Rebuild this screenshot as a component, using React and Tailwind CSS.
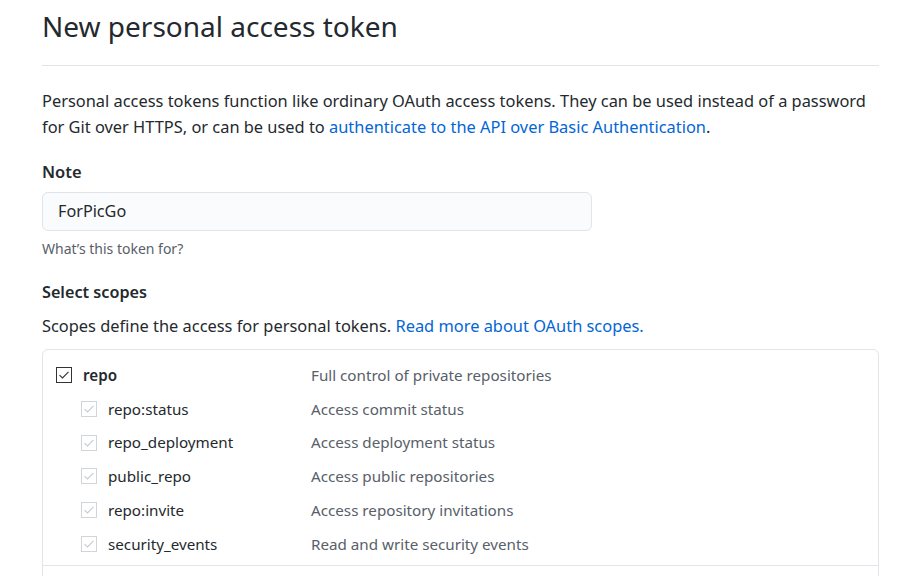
import React from "react";

const font = { fontFamily: '"Noto Sans", "Open Sans", sans-serif' };

function Check({ disabled }) {
  return disabled ? (
    <svg width="16" height="16" viewBox="0 0 16 16" className="shrink-0">
      <rect x="0.5" y="0.5" width="15" height="15" fill="#fff" stroke="#d1d5da" />
      <path d="M3.5 8.2 L6.5 11 L12.5 4.8" fill="none" stroke="#c6cbd1" strokeWidth="1.1" />
    </svg>
  ) : (
    <svg width="16" height="16" viewBox="0 0 16 16" className="shrink-0">
      <rect x="0.5" y="0.5" width="15" height="15" fill="#fff" stroke="#333" />
      <path d="M3.5 8.2 L6.5 11 L12.5 4.8" fill="none" stroke="#333" strokeWidth="1.1" />
    </svg>
  );
}

const subs = [
  ["repo:status", "Access commit status"],
  ["repo_deployment", "Access deployment status"],
  ["public_repo", "Access public repositories"],
  ["repo:invite", "Access repository invitations"],
  ["security_events", "Read and write security events"],
];

export default function App() {
  return (
    <div className="w-[913px] h-[576px] overflow-hidden bg-white text-[#24292e]" style={font}>
      <div className="ml-[42px] w-[837px]">
        <h1 className="pt-[8px] h-[66px] text-[28px] leading-[36px] font-normal border-b border-[#e1e4e8]">
          New personal access token
        </h1>
        <p className="mt-[22px] text-[16.4px] leading-[26px] whitespace-nowrap">
          Personal access tokens function like ordinary OAuth access tokens. They can be used instead of a password
          <br />
          for Git over HTTPS, or can be used to{" "}
          <span className="text-[#0366d6]">authenticate to the API over Basic Authentication</span>.
        </p>
        <div className="mt-[21px] text-[16.5px] leading-[22px] font-semibold">Note</div>
        <div className="mt-[9px] w-[550px] h-[39px] rounded-[6px] border border-[#e1e4e8] bg-[#fafbfc] flex items-center px-[15px] text-[16.2px]">
          ForPicGo
        </div>
        <div className="mt-[8px] text-[14px] leading-[20px] text-[#586069]">What’s this token for?</div>
        <div className="mt-[22px] text-[16.2px] leading-[22px] font-semibold">Select scopes</div>
        <p className="mt-[12px] text-[16.4px] leading-[22px]">
          Scopes define the access for personal tokens.{" "}
          <span className="text-[#0366d6]">Read more about OAuth scopes.</span>
        </p>
        <div className="mt-[12px] rounded-t-[6px] border border-[#e1e4e8] h-[300px]">
          <div className="border-b border-[#e1e4e8] pt-[8px] pb-[4px]">
            <div className="flex items-center h-[34px] pl-[13px]">
              <Check />
              <span className="ml-[11px] w-[228px] font-semibold text-[15.2px]">repo</span>
              <span className="text-[15.2px] text-[#586069]">Full control of private repositories</span>
            </div>
            {subs.map(([n, d]) => (
              <div key={n} className="flex items-center h-[33.8px] pl-[38px]">
                <Check disabled />
                <span className="ml-[11px] w-[203px] text-[15.2px]">{n}</span>
                <span className="text-[15.2px] text-[#586069]">{d}</span>
              </div>
            ))}
          </div>
        </div>
      </div>
    </div>
  );
}
